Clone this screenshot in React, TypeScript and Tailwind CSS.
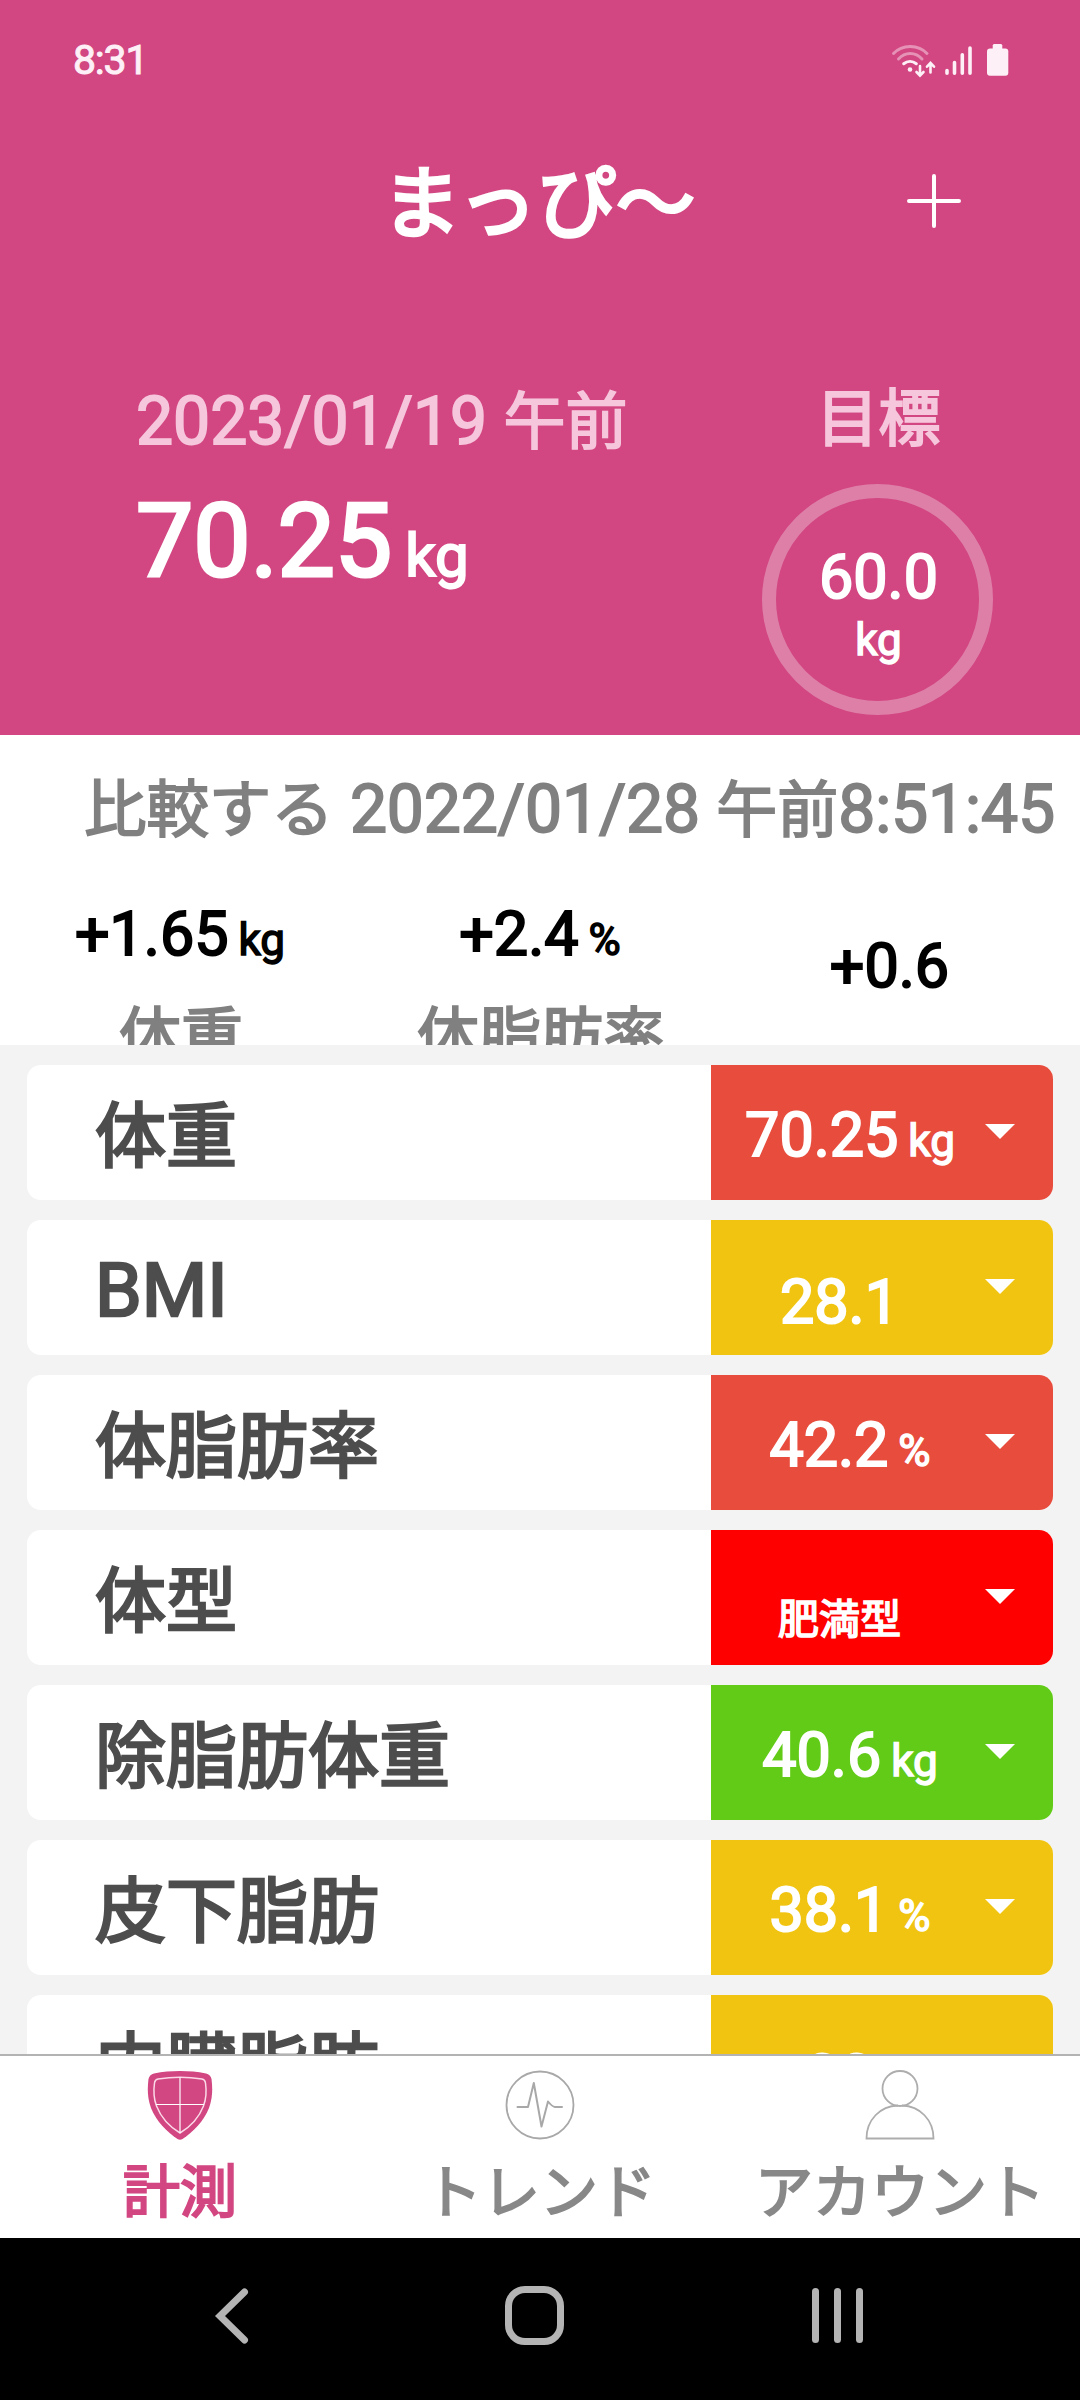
import clsx from "clsx";

type Metric = {
  label: string;
  value: string;
  unit?: string;
  color: string;
  isText?: boolean;
};

const metrics: Metric[] = [
  { label: "体重", value: "70.25", unit: "kg", color: "bg-[#e74c3c]" },
  { label: "BMI", value: "28.1", color: "bg-[#f0c411]" },
  { label: "体脂肪率", value: "42.2", unit: "%", color: "bg-[#e74c3c]" },
  { label: "体型", value: "肥満型", color: "bg-[#ff0000]", isText: true },
  { label: "除脂肪体重", value: "40.6", unit: "kg", color: "bg-[#62cb17]" },
  { label: "皮下脂肪", value: "38.1", unit: "%", color: "bg-[#f0c411]" },
  { label: "内臓脂肪", value: "20", color: "bg-[#f0c411]" },
];

const StatusIcons = () => (
  <svg width="120" height="40" viewBox="0 0 120 40" fill="none">
    <g stroke="#fdf0f6" strokeWidth="3" strokeLinecap="round">
      <path d="M3.5 13.5C12 4 28.5 4 37 13.5" opacity="0.45" />
      <path d="M8.5 19C15 11.5 25.5 11.5 32 19" opacity="0.45" />
      <path d="M13.7 23.7C17.5 20.7 22.5 20.7 26.3 23.7" />
      <path d="M30 26v9M26.5 32l3.5 3.7 3.5-3.7" strokeWidth="2.6" />
      <path d="M40.5 32.5v-9M37 26.7l3.5-3.7 3.5 3.7" strokeWidth="2.6" />
      <path d="M57 30.5v2.7M64.5 22.5v10.7M72.3 14.7v18.5M80 8v25.2" strokeWidth="3.6" />
    </g>
    <circle cx="20" cy="29.5" r="2.3" fill="#fdf0f6" />
    <rect x="102.7" y="4" width="9.6" height="8" rx="1.5" fill="#fdf0f6" />
    <rect x="97" y="8.5" width="21.3" height="27.2" rx="3" fill="#fdf0f6" />
  </svg>
);

const ShieldIcon = () => (
  <svg width="70" height="70" viewBox="0 0 70 70" fill="none">
    <path
      d="M9 3.5C26 .3 44 .3 61 3.5Q65.5 4.5 66.5 9C67.5 17 68 27 64 38C59 51 48 62 37.5 69Q35 70.5 32.5 69C22 62 11 51 6 38C2 27 2.5 17 3.5 9Q4.5 4.5 9 3.5Z"
      fill="#d24681"
    />
    <path
      d="M13 9Q35 5.5 57 9Q60 9.5 60.5 13C61.5 20 61.5 28 58.5 36C54 47.5 45 57 35 63C25 57 16 47.5 11.5 36C8.5 28 8.5 20 9.5 13Q10 9.5 13 9Z"
      stroke="#fbd9e8"
      strokeWidth="1.5"
    />
    <path d="M35 7.5V63M11 34.5H59" stroke="#fff" strokeWidth="1.2" />
  </svg>
);

const TrendIcon = () => (
  <svg width="70" height="70" viewBox="0 0 70 70" fill="none" stroke="#a8a8a8">
    <circle cx="35" cy="35" r="33.5" strokeWidth="1.8" />
    <path
      d="M12.5 37H23L28.8 13L36.5 56.5L43 31.5Q47 36.5 50 37H57"
      strokeWidth="2"
      strokeLinecap="round"
      strokeLinejoin="round"
    />
  </svg>
);

const AccountIcon = () => (
  <svg width="70" height="70" viewBox="0 0 70 70" fill="none" stroke="#adadad" strokeWidth="1.8">
    <circle cx="35" cy="18.5" r="17.5" />
    <path d="M33 35.5C15 36 1.5 50 1.5 68.5H68.5C68.5 50 55 36 37 35.5" />
  </svg>
);

const tabs = [
  { label: "計測", icon: <ShieldIcon />, active: true },
  { label: "トレンド", icon: <TrendIcon />, active: false },
  { label: "アカウント", icon: <AccountIcon />, active: false },
];

const MetricRow = ({ metric }: { metric: Metric }) => {
  return (
    <div className="flex h-[135px] shrink-0 overflow-hidden rounded-[14px] bg-white">
      <p className="flex-1 pt-[33px] pl-[68px] text-[75px] leading-none text-[#4d4d4d] [-webkit-text-stroke:2.6px]">
        {metric.label === "BMI" ? (
          metric.label
        ) : (
          <span className="text-[71px]">{metric.label}</span>
        )}
      </p>
      <div className={clsx("flex w-[342px] pr-[38px] pl-1 text-white", metric.color)}>
        <div
          className={clsx(
            "flex flex-1 items-baseline justify-center leading-none",
            metric.unit ? "gap-[10px] pt-[40px]" : "pt-[52px] pr-[21px]"
          )}
        >
          {metric.isText ? (
            <span className="pt-[18px] text-[41px] [-webkit-text-stroke:1.7px]">{metric.value}</span>
          ) : (
            <span className="text-[61px] [-webkit-text-stroke:2px]">{metric.value}</span>
          )}
          {metric.unit && (
            <span className="text-[44px] [-webkit-text-stroke:1.5px]">{metric.unit}</span>
          )}
        </div>
        <svg className="mt-[59px]" width="30" height="15" viewBox="0 0 30 15" fill="#fff">
          <path d="M0 0H30L15 15Z" />
        </svg>
      </div>
    </div>
  );
};

const App = () => {
  return (
    <div className="flex h-[2400px] w-[1080px] flex-col overflow-hidden bg-white font-['Roboto','Noto_Sans_CJK_JP',sans-serif]">
      <header className="h-[735px] shrink-0 bg-[#d24681] text-white">
        <div className="flex h-[120px] items-center justify-between pr-[70px] pl-[73px]">
          <span className="text-[41px] leading-none tracking-[-1.2px] text-[#fdf0f6] [-webkit-text-stroke:1px]">
            8:31
          </span>
          <StatusIcons />
        </div>

        <div className="grid h-[160px] grid-cols-[146px_788px_146px] pt-[46px]">
          <h1 className="col-start-2 -ml-[3px] text-center text-[79px] leading-none [-webkit-text-stroke:3.4px]">
            まっぴ〜
          </h1>
          <svg
            className="mt-[8px] -ml-[27px]"
            width="54"
            height="54"
            viewBox="0 0 54 54"
            stroke="#fff"
            strokeWidth="4"
            strokeLinecap="round"
          >
            <path d="M27 2V52M2 27H52" />
          </svg>
        </div>

        <div className="flex pl-[136px]">
          <div className="w-[626px] pt-[109px]">
            <p className="text-[66px] leading-none whitespace-nowrap text-[#f6c6dc] [-webkit-text-stroke:1.8px]">
              2023/01/19 <span className="text-[62px]">午前</span>
            </p>
            <p className="mt-[35px] flex items-baseline gap-[13px] leading-none">
              <span className="text-[102px] [-webkit-text-stroke:3.2px]">70.25</span>
              <span className="text-[60px] [-webkit-text-stroke:2px]">kg</span>
            </p>
          </div>
          <div className="flex w-[231px] flex-col items-center pt-[109px]">
            <p className="ml-[2px] text-[62px] leading-none text-[#f6c6dc] [-webkit-text-stroke:2.2px]">目標</p>
            <div className="mt-[33px] flex size-[231px] flex-col items-center rounded-full border-[14px] border-[#de7fa8] pt-[49px] pl-[2px]">
              <span className="text-[61px] leading-none [-webkit-text-stroke:2px]">60.0</span>
              <span className="mt-[10px] text-[44px] leading-none [-webkit-text-stroke:1.5px]">kg</span>
            </div>
          </div>
        </div>
      </header>

      <section className="h-[310px] shrink-0 overflow-hidden pt-[42px]">
        <p className="pl-[84px] text-[66px] leading-none tracking-[-0.1px] whitespace-nowrap text-[#808080] [-webkit-text-stroke:1.8px]">
          <span className="text-[62.5px]">比較する</span> 2022/01/28 <span className="text-[61px]">午前</span>
          8:51:45
        </p>
        <div className="mt-[61px] grid grid-cols-3 text-center leading-none [-webkit-text-stroke:2px]">
          <div>
            <p className="flex items-baseline justify-center gap-[10px]">
              <span className="text-[61px]">+1.65</span>
              <span className="text-[44px] [-webkit-text-stroke:1.5px]">kg</span>
            </p>
            <p className="mt-[42px] ml-[2px] text-[62px] leading-none text-[#808080]">体重</p>
          </div>
          <div>
            <p className="flex items-baseline justify-center gap-[10px]">
              <span className="text-[61px]">+2.4</span>
              <span className="text-[44px] [-webkit-text-stroke:1.5px]">%</span>
            </p>
            <p className="mt-[42px] ml-[2px] text-[62px] leading-none text-[#808080]">体脂肪率</p>
          </div>
          <p className="mt-[32px] pr-[21px] text-[61px] leading-none">+0.6</p>
        </div>
      </section>

      <main className="flex h-[1009px] shrink-0 flex-col gap-[20px] overflow-hidden bg-[#f3f3f3] px-[27px] pt-[20px]">
        {metrics.map((metric) => (
          <MetricRow key={metric.label} metric={metric} />
        ))}
      </main>

      <nav className="grid h-[184px] shrink-0 grid-cols-3 border-t-2 border-[#b3b3b3] bg-white">
        {tabs.map((tab) => (
          <div key={tab.label} className="flex flex-col items-center pt-[14px]">
            {tab.icon}
            <span
              className={clsx(
                "mt-[24px] leading-none whitespace-nowrap",
                tab.active
                  ? "text-[57px] text-[#d24681] [-webkit-text-stroke:2.2px]"
                  : "text-[58px] text-[#888888] [-webkit-text-stroke:2px]"
              )}
            >
              {tab.label}
            </span>
          </div>
        ))}
      </nav>

      <footer className="flex h-[162px] shrink-0 items-center justify-between bg-black pr-[217px] pb-[7px] pl-[214px]">
        <svg width="36" height="56" viewBox="0 0 36 56" fill="none" stroke="#b4b4b4" strokeWidth="7" strokeLinecap="round">
          <path d="M30.5 4L6 28L30.5 52" />
        </svg>
        <div className="ml-[6px] size-[59px] rounded-[20px] border-[7px] border-[#b4b4b4]" />
        <div className="flex gap-[15px]">
          <div className="h-[55px] w-[7px] rounded-full bg-[#b4b4b4]" />
          <div className="h-[55px] w-[7px] rounded-full bg-[#b4b4b4]" />
          <div className="h-[55px] w-[7px] rounded-full bg-[#b4b4b4]" />
        </div>
      </footer>
    </div>
  );
};

export default App;
